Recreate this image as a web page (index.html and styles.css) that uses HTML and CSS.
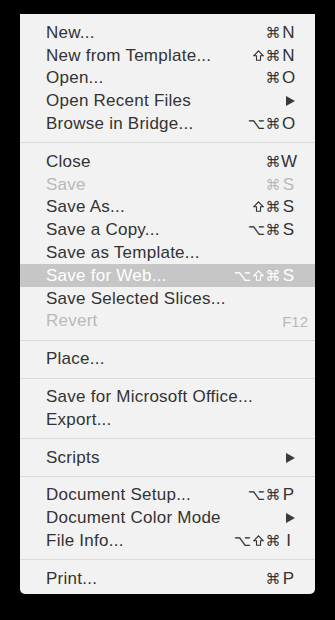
FILE: index.html
```html
<!DOCTYPE html>
<html>
<head>
<meta charset="utf-8">
<link rel="stylesheet" href="styles.css">
</head>
<body>
<div class="menu">
  <div class="item"><span class="label">New...</span><span class="sc"><span class="mods">⌘</span><span class="key">N</span></span></div>
  <div class="item"><span class="label">New from Template...</span><span class="sc"><span class="mods"><svg class="shift" viewBox="0 0 11 11"><path d="M5.5 0.8 L10.2 5.8 H7.5 V10.2 H3.5 V5.8 H0.8 Z"/></svg>⌘</span><span class="key">N</span></span></div>
  <div class="item"><span class="label">Open...</span><span class="sc"><span class="mods">⌘</span><span class="key">O</span></span></div>
  <div class="item"><span class="label">Open Recent Files</span><span class="arrow"></span></div>
  <div class="item"><span class="label">Browse in Bridge...</span><span class="sc"><span class="mods">⌥⌘</span><span class="key">O</span></span></div>
  <div class="sep"></div>
  <div class="item"><span class="label">Close</span><span class="sc"><span class="mods">⌘</span><span class="key">W</span></span></div>
  <div class="item disabled"><span class="label">Save</span><span class="sc"><span class="mods">⌘</span><span class="key">S</span></span></div>
  <div class="item"><span class="label">Save As...</span><span class="sc"><span class="mods"><svg class="shift" viewBox="0 0 11 11"><path d="M5.5 0.8 L10.2 5.8 H7.5 V10.2 H3.5 V5.8 H0.8 Z"/></svg>⌘</span><span class="key">S</span></span></div>
  <div class="item"><span class="label">Save a Copy...</span><span class="sc"><span class="mods">⌥⌘</span><span class="key">S</span></span></div>
  <div class="item"><span class="label">Save as Template...</span></div>
  <div class="item active"><span class="label">Save for Web...</span><span class="sc"><span class="mods">⌥<svg class="shift" viewBox="0 0 11 11"><path d="M5.5 0.8 L10.2 5.8 H7.5 V10.2 H3.5 V5.8 H0.8 Z"/></svg>⌘</span><span class="key">S</span></span></div>
  <div class="item"><span class="label">Save Selected Slices...</span></div>
  <div class="item disabled"><span class="label">Revert</span><span class="fkey">F12</span></div>
  <div class="sep"></div>
  <div class="item"><span class="label">Place...</span></div>
  <div class="sep"></div>
  <div class="item"><span class="label">Save for Microsoft Office...</span></div>
  <div class="item"><span class="label">Export...</span></div>
  <div class="sep"></div>
  <div class="item"><span class="label">Scripts</span><span class="arrow"></span></div>
  <div class="sep"></div>
  <div class="item"><span class="label">Document Setup...</span><span class="sc"><span class="mods">⌥⌘</span><span class="key">P</span></span></div>
  <div class="item"><span class="label">Document Color Mode</span><span class="arrow"></span></div>
  <div class="item"><span class="label">File Info...</span><span class="sc"><span class="mods">⌥<svg class="shift" viewBox="0 0 11 11"><path d="M5.5 0.8 L10.2 5.8 H7.5 V10.2 H3.5 V5.8 H0.8 Z"/></svg>⌘</span><span class="key">I</span></span></div>
  <div class="sep"></div>
  <div class="item"><span class="label">Print...</span><span class="sc"><span class="mods">⌘</span><span class="key">P</span></span></div>
</div>
</body>
</html>
```
FILE: styles.css
```css
html, body {
  margin: 0;
  background: #000;
}
body {
  padding: 14px 20px 0 20px;
  height: 620px;
  box-sizing: border-box;
  font-family: "Liberation Sans", Arial, sans-serif;
}
.menu {
  width: 295px;
  background: #f2f2f2;
  border-radius: 0 0 5px 5px;
  padding: 7.5px 0 3.5px 0;
  color: #333;
}
.item {
  display: flex;
  align-items: center;
  height: 22.8px;
  padding: 0 19px 0 26px;
  font-size: 17px;
  letter-spacing: 0.25px;
}
.label {
  flex: 1;
  white-space: nowrap;
}
.sc {
  display: flex;
  align-items: center;
}
.mods {
  display: flex;
  align-items: center;
  font-family: "DejaVu Sans", sans-serif;
  font-size: 15px;
  letter-spacing: 0.5px;
}
.shift {
  width: 11px;
  height: 11px;
  margin: 0 2px 1px 1px;
  fill: none;
  stroke: currentColor;
  stroke-width: 1.1;
  stroke-linejoin: miter;
}
.key {
  width: 15px;
  text-align: center;
  letter-spacing: 0;
}
.fkey {
  margin-right: -12px;
  font-size: 15px;
  letter-spacing: 0;
}
.arrow {
  width: 0;
  height: 0;
  border-top: 5px solid transparent;
  border-bottom: 5px solid transparent;
  border-left: 9px solid #3a3a3a;
  margin-right: 1px;
}
.disabled {
  color: #b9b9b9;
}
.active {
  background: #c6c6c6;
  color: #fff;
}
.sep {
  height: 15px;
  display: flex;
  align-items: center;
}
.sep::before {
  content: "";
  display: block;
  width: 100%;
  height: 1px;
  background: #dadada;
}
```
